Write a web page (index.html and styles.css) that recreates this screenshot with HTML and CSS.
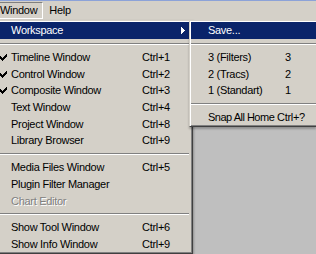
FILE: index.html
```html
<!DOCTYPE html>
<html lang="en">
<head>
  <meta charset="UTF-8">
  <title>Window Menu</title>
  <link rel="stylesheet" href="styles.css">
</head>
<body>
  <div id="menubar">
    <span class="bar-item pressed">Window</span>
    <span class="bar-item">Help</span>
  </div>

  <div class="menus">
    <div class="menu main-menu">
      <div class="item selected">
        <span class="gutter"></span>
        <span class="label">Workspace</span>
        <svg class="arrow" width="4" height="7" viewBox="0 0 4 7"><path d="M0 0h1v7h-1zM1 1h1v5h-1zM2 2h1v3h-1zM3 3h1v1h-1z" fill="#fff"/></svg>
      </div>
      <div class="sep"></div>
      <div class="item">
        <span class="gutter"><svg class="check" width="7" height="7" viewBox="0 0 7 7"><path d="M0 2h1v3h-1zM1 3h1v3h-1zM2 4h1v3h-1zM3 3h1v3h-1zM4 2h1v3h-1zM5 1h1v3h-1zM6 0h1v3h-1z"/></svg></span>
        <span class="label">Timeline Window</span><span class="key">Ctrl+1</span>
      </div>
      <div class="item">
        <span class="gutter"><svg class="check" width="7" height="7" viewBox="0 0 7 7"><path d="M0 2h1v3h-1zM1 3h1v3h-1zM2 4h1v3h-1zM3 3h1v3h-1zM4 2h1v3h-1zM5 1h1v3h-1zM6 0h1v3h-1z"/></svg></span>
        <span class="label">Control Window</span><span class="key">Ctrl+2</span>
      </div>
      <div class="item">
        <span class="gutter"><svg class="check" width="7" height="7" viewBox="0 0 7 7"><path d="M0 2h1v3h-1zM1 3h1v3h-1zM2 4h1v3h-1zM3 3h1v3h-1zM4 2h1v3h-1zM5 1h1v3h-1zM6 0h1v3h-1z"/></svg></span>
        <span class="label">Composite Window</span><span class="key">Ctrl+3</span>
      </div>
      <div class="item">
        <span class="gutter"></span>
        <span class="label">Text Window</span><span class="key">Ctrl+4</span>
      </div>
      <div class="item">
        <span class="gutter"></span>
        <span class="label">Project Window</span><span class="key">Ctrl+8</span>
      </div>
      <div class="item">
        <span class="gutter"></span>
        <span class="label">Library Browser</span><span class="key">Ctrl+9</span>
      </div>
      <div class="sep"></div>
      <div class="item">
        <span class="gutter"></span>
        <span class="label">Media Files Window</span><span class="key">Ctrl+5</span>
      </div>
      <div class="item">
        <span class="gutter"></span>
        <span class="label">Plugin Filter Manager</span>
      </div>
      <div class="item disabled">
        <span class="gutter"></span>
        <span class="label">Chart Editor</span>
      </div>
      <div class="sep"></div>
      <div class="item">
        <span class="gutter"></span>
        <span class="label">Show Tool Window</span><span class="key">Ctrl+6</span>
      </div>
      <div class="item">
        <span class="gutter"></span>
        <span class="label">Show Info Window</span><span class="key">Ctrl+9</span>
      </div>
    </div>

    <div class="menu submenu">
      <div class="item selected">
        <span class="gutter"></span>
        <span class="label sub-label">Save...</span>
      </div>
      <div class="sep"></div>
      <div class="item">
        <span class="gutter"></span>
        <span class="label sub-label">3 (Filters)</span><span class="key">3</span>
      </div>
      <div class="item">
        <span class="gutter"></span>
        <span class="label sub-label">2 (Tracs)</span><span class="key">2</span>
      </div>
      <div class="item">
        <span class="gutter"></span>
        <span class="label sub-label">1 (Standart)</span><span class="key">1</span>
      </div>
      <div class="sep"></div>
      <div class="item">
        <span class="gutter"></span>
        <span class="label snap-label">Snap All Home</span><span class="key">Ctrl+?</span>
      </div>
    </div>
  </div>
</body>
</html>
```

FILE: styles.css
```css
body {
  margin: 0;
  width: 316px;
  height: 254px;
  overflow: hidden;
  background-color: #bfbfbf;
  border-top: 1px solid #8ca2d8;
  box-sizing: border-box;
  font-family: "Liberation Sans", Arial, sans-serif;
  font-size: 11px;
  letter-spacing: -0.3px;
  color: #000;
}
#menubar {
  display: flex;
  background-color: #d4d0c8;
  padding: 1px 0;
}
.bar-item {
  height: 17px;
  line-height: 15px;
  border: 1px solid transparent;
  box-sizing: border-box;
  padding: 0 4px 0 5px;
}
.bar-item.pressed {
  border-left: 0;
  padding-left: 0;
  padding-right: 5px;
  border-color: #808080 #fff #fff #808080;
}
.menus {
  display: flex;
  align-items: flex-start;
}
.menu {
  flex-shrink: 0;
  box-sizing: border-box;
  background-color: #d4d0c8;
  border: 1px solid;
  border-color: #d4d0c8 #404040 #404040 #d4d0c8;
}
.main-menu {
  width: 193px;
  border-left: 0;
  padding: 1px 3px 1px 0;
  box-shadow: inset 0 1px #fff, inset -1px -1px #808080, 1px 1px 2px rgba(0, 0, 0, 0.25);
}
.submenu {
  position: relative;
  z-index: 1;
  margin-left: -4px;
  width: 127px;
  border-right: 0;
  padding: 1px 0 1px 1px;
  box-shadow: inset 1px 1px #fff, inset 0 -1px #808080, 0 2px 2px rgba(0, 0, 0, 0.25);
}
.item {
  display: flex;
  align-items: center;
  height: 16.7px;
  white-space: nowrap;
}
.item.selected {
  background-color: #0a246a;
  color: #fff;
}
.item.disabled {
  color: #808080;
  text-shadow: 1px 1px 0 #fff;
}
.gutter {
  width: 17px;
  flex-shrink: 0;
  display: flex;
  align-items: center;
}
.main-menu .gutter {
  width: 11px;
}
.check {
  display: block;
  margin-top: 1px;
}
.label {
  width: 131px;
  flex-shrink: 0;
}
.sub-label {
  width: 77px;
}
.snap-label {
  width: 69px;
  letter-spacing: -0.5px;
}
.arrow {
  display: block;
  margin-left: auto;
  margin-right: 4px;
}
.sep {
  height: 0;
  border-top: 1px solid #808080;
  border-bottom: 1px solid #fff;
  margin: 4px 0 4px;
}
```
